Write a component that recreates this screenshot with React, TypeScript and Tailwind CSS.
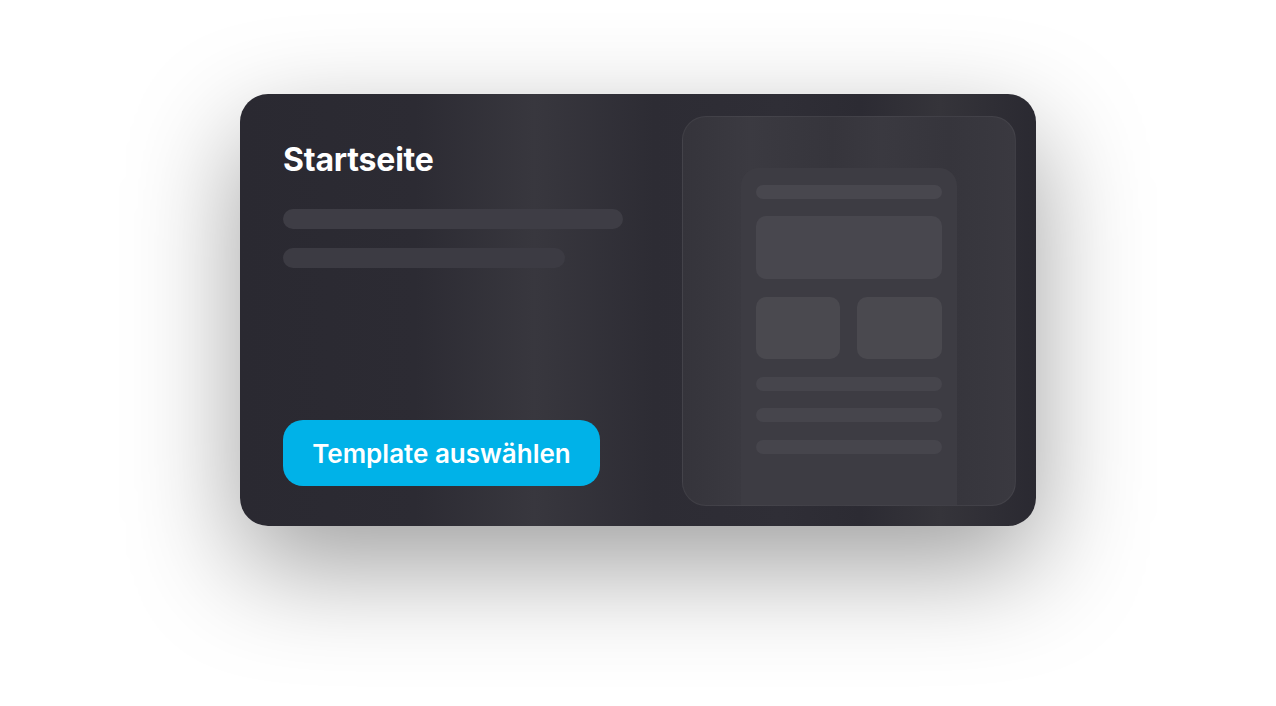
export default function App() {
  return (
    <div className="min-h-screen w-full bg-white flex justify-center pt-[94px] font-['Inter','Liberation_Sans',sans-serif]">
      <div className="w-[796px] h-[432px] rounded-[28px] flex pt-[22px] pb-[20px] pr-[20px] pl-[43px] bg-[linear-gradient(90deg,#2a2931_0%,#2c2b33_22%,#38373e_37%,#2d2c34_52%,#2f2e36_68%,#2c2b33_78%,#35343a_88%,#2a2931_100%)] shadow-[0_40px_110px_rgba(0,0,0,0.38)]">
        {/* left column */}
        <div className="flex-1 flex flex-col">
          <h1 className="mt-[24px] text-[32px] leading-[40px] font-bold text-white tracking-[-0.2px]">
            Startseite
          </h1>
          <div className="mt-[29px] w-[340px] h-[20px] rounded-full bg-[#3e3d45]" />
          <div className="mt-[19px] w-[282px] h-[20px] rounded-full bg-[#3c3b43]" />
          <button className="mt-auto mb-[20px] w-[317px] h-[66px] rounded-[20px] bg-[#00b2e8] text-white text-[26px] font-semibold">
            Template auswählen
          </button>
        </div>

        {/* preview panel */}
        <div className="w-[334px] h-full rounded-[24px] border border-white/[0.05] overflow-hidden flex justify-center pt-[51px] bg-[linear-gradient(90deg,#35343b_0%,#3b3a41_20%,#36353c_45%,#3a3940_60%,#36353c_80%,#3a3940_100%)]">
          <div className="w-[216px] h-full rounded-t-[18px] bg-[#3e3d44]/90 px-[15px] pt-[17px] flex flex-col">
            <div className="h-[14px] rounded-full bg-[#48474e]" />
            <div className="mt-[17px] h-[63px] rounded-[10px] bg-[#48474e]" />
            <div className="mt-[18px] flex gap-[17px]">
              <div className="w-[84px] h-[62px] rounded-[10px] bg-[#4a494f]" />
              <div className="flex-1 h-[62px] rounded-[10px] bg-[#4a494f]" />
            </div>
            <div className="mt-[18px] h-[14px] rounded-full bg-[#46454c]" />
            <div className="mt-[17px] h-[14px] rounded-full bg-[#46454c]" />
            <div className="mt-[18px] h-[14px] rounded-full bg-[#46454c]" />
          </div>
        </div>
      </div>
    </div>
  );
}
